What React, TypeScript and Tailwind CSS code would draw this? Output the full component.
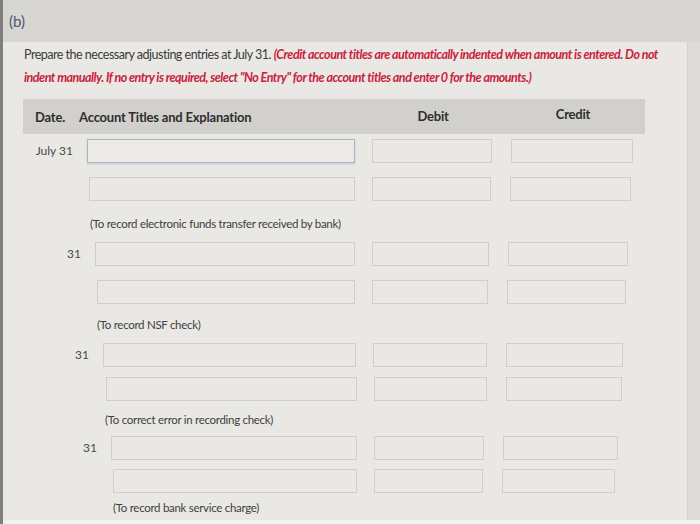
import React from 'react'

type RowSpec = {
  date?: string
  mt: string
  dateW: string
  acctW: string
  debitW: string
  creditW: string
  focused?: boolean
}

type Group = {
  rows: RowSpec[]
  note: string
  noteCls: string
}

const groups: Group[] = [
  {
    rows: [
      { date: 'July 31', mt: 'mt-[5px]', dateW: 'w-[84px]', acctW: 'w-[268px]', debitW: 'w-[120px]', creditW: 'w-[122px]', focused: true },
      { mt: 'mt-[14px]', dateW: 'w-[86px]', acctW: 'w-[266px]', debitW: 'w-[119px]', creditW: 'w-[121px]' }
    ],
    note: '(To record electronic funds transfer received by bank)',
    noteCls: 'mt-[15px] pl-[87px]'
  },
  {
    rows: [
      { date: '31', mt: 'mt-[10px]', dateW: 'w-[92px]', acctW: 'w-[260px]', debitW: 'w-[117px]', creditW: 'w-[120px]' },
      { mt: 'mt-[14px]', dateW: 'w-[94px]', acctW: 'w-[258px]', debitW: 'w-[116px]', creditW: 'w-[119px]' }
    ],
    note: '(To record NSF check)',
    noteCls: 'mt-[13px] pl-[94px]'
  },
  {
    rows: [
      { date: '31', mt: 'mt-[10px]', dateW: 'w-[100px]', acctW: 'w-[253px]', debitW: 'w-[114px]', creditW: 'w-[117px]' },
      { mt: 'mt-[10px]', dateW: 'w-[103px]', acctW: 'w-[251px]', debitW: 'w-[113px]', creditW: 'w-[116px]' }
    ],
    note: '(To correct error in recording check)',
    noteCls: 'mt-[11px] pl-[102px]'
  },
  {
    rows: [
      { date: '31', mt: 'mt-[8px]', dateW: 'w-[108px]', acctW: 'w-[246px]', debitW: 'w-[110px]', creditW: 'w-[115px]' },
      { mt: 'mt-[9px]', dateW: 'w-[110px]', acctW: 'w-[244px]', debitW: 'w-[109px]', creditW: 'w-[113px]' }
    ],
    note: '(To record bank service charge)',
    noteCls: 'mt-[7px] pl-[110px]'
  }
]

function Row({ row }: { row: RowSpec }) {
  const box = 'h-full border border-[#cfceca] bg-[#e9e8e4]'
  return (
    <div className={`flex items-center h-[24px] ${row.mt}`}>
      <div className={`${row.dateW} shrink-0 pr-[14px] text-right text-[12px] text-[#4a4a4a]`}>{row.date}</div>
      <div
        className={`${row.acctW} shrink-0 ${
          row.focused
            ? 'h-full border border-[#aab3c8] bg-[#eceae6] shadow-[0_1px_2px_rgba(90,110,150,0.25)]'
            : box
        }`}
      />
      <div className={`${row.debitW} shrink-0 ml-[17px] ${box}`} />
      <div className={`${row.creditW} shrink-0 ml-[19px] ${box}`} />
    </div>
  )
}

export default function App() {
  return (
    <div
      className="w-[700px] h-[524px] overflow-hidden flex flex-col bg-[#dddcd8] border-l-[3px] border-[#7f7f7f] text-[#3b3b3b]"
      style={{ fontFamily: 'Lato, "Open Sans", sans-serif' }}
    >
      <div className="h-[42px] shrink-0 bg-[#d7d6d2] pl-[6px] pt-[10px] text-[15px] text-[#4b5670]">(b)</div>

      <div className="flex-1 mr-[12px] bg-[#e9e8e4] border-r border-[#d2d1cd] pt-[1px]">
        <p className="pl-[21px] whitespace-nowrap text-[12.5px] leading-[23px] tracking-[-0.5px] text-[#3b3b3b]">
          Prepare the necessary adjusting entries at July 31.{' '}
          <span className="font-bold italic text-[#c9213c]">
            (Credit account titles are automatically indented when amount is entered. Do not
            <br />
            indent manually. If no entry is required, select "No Entry" for the account titles and enter 0 for the
            amounts.)
          </span>
        </p>

        <div className="mt-[10px] ml-[20px] w-[622px] h-[35px] bg-[#d1d0cc] flex items-center text-[13px] tracking-[-0.2px] font-bold text-[#2e2e2e]">
          <span className="pl-[12px] pt-[3px]">Date.</span>
          <span className="pl-[14px] pt-[2px]">Account Titles and Explanation</span>
          <span className="ml-[166px]">Debit</span>
          <span className="ml-[107px] pb-[3px]">Credit</span>
        </div>

        {groups.map((g, i) => (
          <div key={i}>
            {g.rows.map((r, j) => (
              <Row key={j} row={r} />
            ))}
            <div className={`${g.noteCls} text-[11.5px] tracking-[-0.3px] leading-[16px] text-[#404040]`}>{g.note}</div>
          </div>
        ))}
      </div>
      <div className="h-[4px] shrink-0 bg-[#f1f1ef]" />
    </div>
  )
}
